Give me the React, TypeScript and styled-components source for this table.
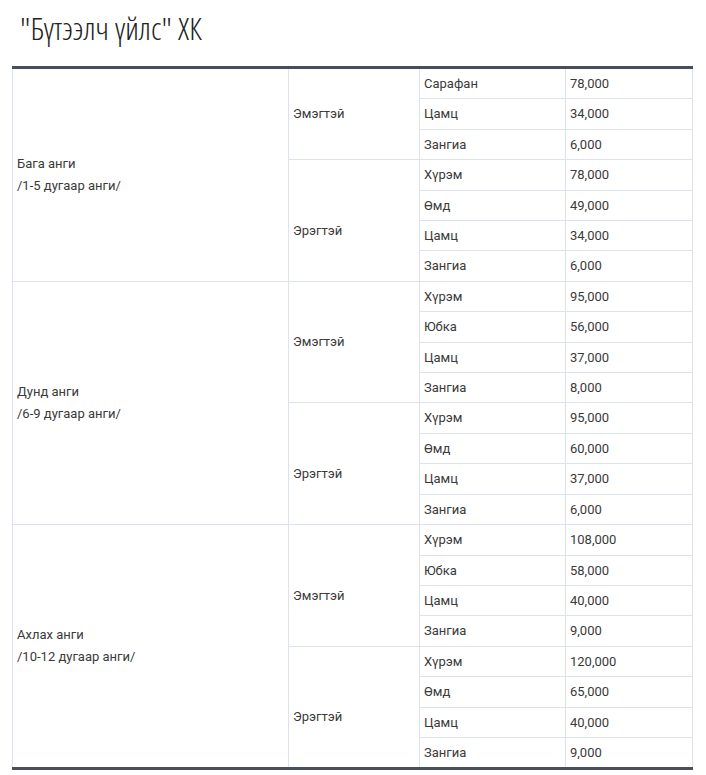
import React from "react";
import styled, { createGlobalStyle } from "styled-components";

const Global = createGlobalStyle`
  html, body { margin: 0; padding: 0; background: #fff; }
  body { font-family: Roboto, "Liberation Sans", Arial, sans-serif; color: #333; }
`;

const Page = styled.div`
  padding: 10px 14px 0 12px;
`;

const Title = styled.h1`
  margin: 0 0 20px 8px;
  font-family: "Open Sans", "Liberation Sans", sans-serif;
  font-stretch: 75%;
  font-weight: 300;
  font-size: 32px;
  line-height: 36px;
  color: #222;
`;

const Table = styled.table`
  width: 680px;
  border-collapse: collapse;
  table-layout: fixed;
  border-top: 3px solid #474e5e;
  border-bottom: 3px solid #474e5e;
  font-size: 13px;
  color: #3a3a3a;
`;

const Cell = styled.td<{ $shift?: boolean }>`
  border: 1px solid #dde2ec;
  padding: ${(p) => (p.$shift ? "25px 5px 5px 4px" : "5px 5px 5px 4px")};
  line-height: 19.4px;
  vertical-align: middle;
  text-align: left;
`;

const Line = styled.span`
  display: block;
  line-height: 22px;
`;

type Item = [string, string];
type Gender = { label: string; shift?: boolean; items: Item[] };
type Group = { name: string; range: string; genders: Gender[] };

const data: Group[] = [
  {
    name: "Бага анги",
    range: "/1-5 дугаар анги/",
    genders: [
      { label: "Эмэгтэй", items: [["Сарафан", "78,000"], ["Цамц", "34,000"], ["Зангиа", "6,000"]] },
      { label: "Эрэгтэй", shift: true, items: [["Хүрэм", "78,000"], ["Өмд", "49,000"], ["Цамц", "34,000"], ["Зангиа", "6,000"]] },
    ],
  },
  {
    name: "Дунд анги",
    range: "/6-9 дугаар анги/",
    genders: [
      { label: "Эмэгтэй", items: [["Хүрэм", "95,000"], ["Юбка", "56,000"], ["Цамц", "37,000"], ["Зангиа", "8,000"]] },
      { label: "Эрэгтэй", shift: true, items: [["Хүрэм", "95,000"], ["Өмд", "60,000"], ["Цамц", "37,000"], ["Зангиа", "6,000"]] },
    ],
  },
  {
    name: "Ахлах анги",
    range: "/10-12 дугаар анги/",
    genders: [
      { label: "Эмэгтэй", shift: true, items: [["Хүрэм", "108,000"], ["Юбка", "58,000"], ["Цамц", "40,000"], ["Зангиа", "9,000"]] },
      { label: "Эрэгтэй", shift: true, items: [["Хүрэм", "120,000"], ["Өмд", "65,000"], ["Цамц", "40,000"], ["Зангиа", "9,000"]] },
    ],
  },
];

export default function App() {
  const rows: React.ReactNode[] = [];
  data.forEach((g, gi) => {
    const total = g.genders.reduce((s, x) => s + x.items.length, 0);
    g.genders.forEach((gen, ni) => {
      gen.items.forEach((it, ii) => {
        rows.push(
          <tr key={`${gi}-${ni}-${ii}`}>
            {ni === 0 && ii === 0 && (
              <Cell rowSpan={total}>
                <Line>{g.name}</Line>
                <Line>{g.range}</Line>
              </Cell>
            )}
            {ii === 0 && (
              <Cell rowSpan={gen.items.length} $shift={gen.shift}>
                {gen.label}
              </Cell>
            )}
            <Cell>{it[0]}</Cell>
            <Cell>{it[1]}</Cell>
          </tr>
        );
      });
    });
  });
  return (
    <>
      <Global />
      <Page>
        <Title>"Бүтээлч үйлс" ХК</Title>
        <Table>
          <colgroup>
            <col style={{ width: 276 }} />
            <col style={{ width: 131 }} />
            <col style={{ width: 146 }} />
            <col style={{ width: 127 }} />
          </colgroup>
          <tbody>{rows}</tbody>
        </Table>
      </Page>
    </>
  );
}
